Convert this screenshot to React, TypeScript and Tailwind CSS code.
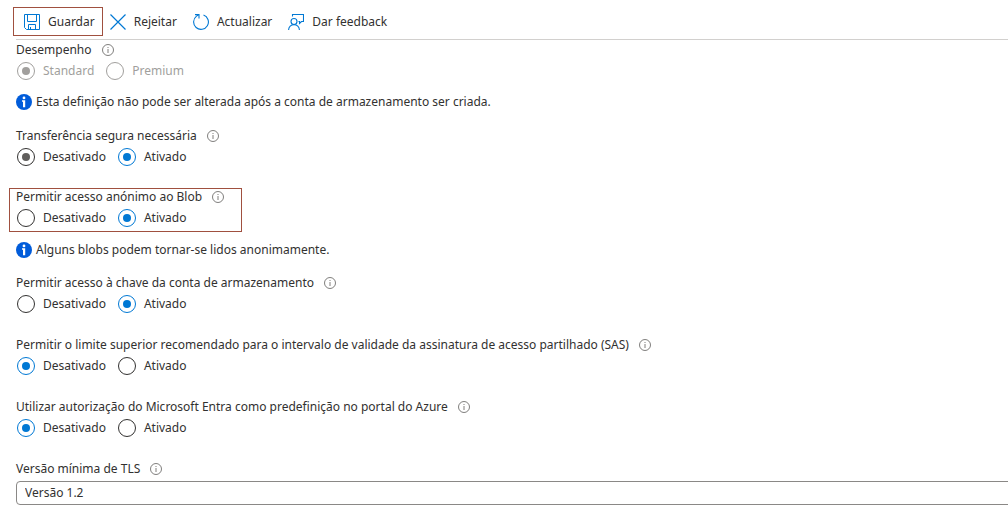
import type { InputHTMLAttributes, ReactNode } from 'react';

function SaveIcon() {
  return (
    <svg className="size-4 shrink-0" viewBox="0 0 16 16" fill="none" stroke="#0078d4" aria-hidden="true">
      <path d="M.5.5h15v15H2.5L.5 13.500z" />
      <path d="M3.500.5v7h9v-7M4.500 15.500v-5h7v5M6.500 13v2.500" />
    </svg>
  );
}

function DiscardIcon() {
  return (
    <svg className="size-4 shrink-0" viewBox="0 0 16 16" fill="none" stroke="#0078d4" strokeWidth="1.2" aria-hidden="true">
      <path d="M.5.5l15 15M15.500.5l-15 15" />
    </svg>
  );
}

function RefreshIcon() {
  return (
    <svg className="size-4 shrink-0" viewBox="0 0 16 16" fill="none" stroke="#0078d4" strokeWidth="1.1" aria-hidden="true">
      <path d="M10.500 1A7.400 7.400 0 1 1 3.500 2.100L5.600.8" />
      <path d="M2 .6h4v4" />
    </svg>
  );
}

function FeedbackIcon() {
  return (
    <svg className="size-4 shrink-0" viewBox="0 0 16 16" fill="none" stroke="#0078d4" strokeWidth="1.1" aria-hidden="true">
      <path d="M4.500 2.500v-2h11v7h-2l-2 2v-2h-1" />
      <circle cx="6" cy="7.500" r="3" />
      <path d="M.6 16a5.400 5.400 0 0 1 10.800 0" />
    </svg>
  );
}

function HelpIcon() {
  return (
    <svg className="size-3 shrink-0" viewBox="0 0 12 12" fill="none" stroke="#605e5c" aria-hidden="true">
      <circle cx="6" cy="6" r="5.500" strokeWidth=".8" />
      <path d="M6 5v4M6 3v1" strokeWidth=".8" />
    </svg>
  );
}

function Command({ icon, children }: { icon: ReactNode; children: ReactNode }) {
  return (
    <button type="button" className="flex h-[27px] items-center gap-2">
      {icon}
      {children}
    </button>
  );
}

function Notice({ children }: { children: ReactNode }) {
  return (
    <p className="flex h-5 items-center gap-1">
      <svg className="size-4 shrink-0" viewBox="0 0 16 16" aria-hidden="true">
        <circle cx="8" cy="8" r="8" fill="#015cda" />
        <circle cx="8" cy="3.900" r="1.400" fill="#fff" />
        <path d="M6 6.300h3.200v7H7V7.800H6z" fill="#fff" />
      </svg>
      {children}
    </p>
  );
}

type Tone = 'normal' | 'hinted' | 'disabled';

const tones: Record<Tone, string> = {
  normal: 'border-[#323130] checked:border-[#0078d4] checked:before:bg-[#0078d4]',
  hinted: 'border-[#323130] before:bg-[#605e5c] checked:border-[#0078d4] checked:before:bg-[#0078d4]',
  disabled: 'border-[#a19f9d] checked:before:bg-[#a19f9d]',
};

function Radio({ label, tone = 'normal', ...input }: { label: string; tone?: Tone } & InputHTMLAttributes<HTMLInputElement>) {
  return (
    <label className={`flex items-center gap-2 ${tone === 'disabled' ? 'text-[#a19f9d]' : ''}`}>
      <input
        type="radio"
        disabled={tone === 'disabled'}
        className={`grid size-[18px] shrink-0 appearance-none place-content-center rounded-full border bg-white before:size-2 before:rounded-full ${tones[tone]}`}
        {...input}
      />
      {label}
    </label>
  );
}

interface SettingProps {
  name: string;
  title: string;
  options?: string[];
  selected: string;
  disabled?: boolean;
  hinted?: string;
}

function Setting({ name, title, options = ['Desativado', 'Ativado'], selected, disabled, hinted }: SettingProps) {
  return (
    <fieldset>
      <legend className="flex h-4 items-center gap-2.5">
        {title}
        <HelpIcon />
      </legend>
      <div className="mt-0.5 flex h-[22px] items-center gap-3 pl-px">
        {options.map((option) => (
          <Radio
            key={option}
            name={name}
            value={option}
            label={option}
            defaultChecked={option === selected}
            tone={disabled ? 'disabled' : option === hinted ? 'hinted' : 'normal'}
          />
        ))}
      </div>
    </fieldset>
  );
}

export default function App() {
  return (
    <main className="overflow-x-hidden bg-white pb-3 pl-4 font-['Noto_Sans','Segoe_UI',sans-serif] text-[12px] leading-4 text-[#323130]">
      <header className="-ml-[3px] flex items-center gap-[7px] pt-[7px]">
        <div className="border border-[#a0503f] pl-2.5 pr-[7px]">
          <Command icon={<SaveIcon />}>Guardar</Command>
        </div>
        <div className="flex items-center gap-4">
          <Command icon={<DiscardIcon />}>Rejeitar</Command>
          <Command icon={<RefreshIcon />}>Actualizar</Command>
          <Command icon={<FeedbackIcon />}>Dar feedback</Command>
        </div>
      </header>
      <form className="mt-[3px] border-t border-[#d2d0ce] pt-0.5">
        <Setting name="performance" title="Desempenho" options={['Standard', 'Premium']} selected="Standard" disabled />
        <div className="mt-2.5">
          <Notice>Esta definição não pode ser alterada após a conta de armazenamento ser criada.</Notice>
        </div>
        <div className="mt-4">
          <Setting name="secure" title="Transferência segura necessária" selected="Ativado" hinted="Desativado" />
        </div>
        <div className="-ml-[7px] mt-5 w-fit border border-[#a0503f] pb-0.5 pl-1.5 pr-[17px]">
          <Setting name="blob" title="Permitir acesso anónimo ao Blob" selected="Ativado" />
        </div>
        <div className="mt-2">
          <Notice>Alguns blobs podem tornar-se lidos anonimamente.</Notice>
        </div>
        <div className="mt-[15px] flex flex-col gap-[22px]">
          <Setting name="key" title="Permitir acesso à chave da conta de armazenamento" selected="Ativado" />
          <Setting
            name="sas"
            title="Permitir o limite superior recomendado para o intervalo de validade da assinatura de acesso partilhado (SAS)"
            selected="Desativado"
          />
          <Setting
            name="entra"
            title="Utilizar autorização do Microsoft Entra como predefinição no portal do Azure"
            selected="Desativado"
          />
          <div>
            <label htmlFor="tls" className="flex h-4 items-center gap-2.5">
              Versão mínima de TLS
              <HelpIcon />
            </label>
            <div className="-mr-8 mt-1 flex">
              <select id="tls" defaultValue="1.2" className="h-6 grow appearance-none rounded-sm border border-[#8a8886] bg-white px-2">
                <option value="1.0">Versão 1.0</option>
                <option value="1.1">Versão 1.1</option>
                <option value="1.2">Versão 1.2</option>
              </select>
            </div>
          </div>
        </div>
      </form>
    </main>
  );
}
